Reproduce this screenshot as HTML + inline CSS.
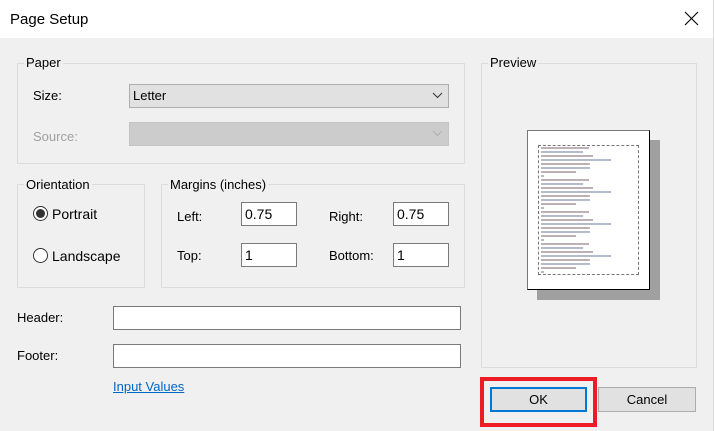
<!DOCTYPE html>
<html><head><meta charset="utf-8"><style>
*{margin:0;padding:0;box-sizing:border-box}
body{width:714px;height:431px;background:#f0f0f0;font-family:"Liberation Sans",sans-serif;font-size:13px;color:#000;position:relative;overflow:hidden}
.a{position:absolute}
.title{left:0;top:0;width:714px;height:38px;background:#fff}
.grp{position:absolute;border:1px solid #dcdcdc}
.lbl{position:absolute;background:#f0f0f0;padding:0 2px;font-size:13px;line-height:15px}
.t{position:absolute;line-height:15px;white-space:nowrap}
.box{position:absolute;background:#fff;border:1px solid #7a7a7a;padding:2px 0 0 3px;font-size:14px;line-height:18px}
.combo{position:absolute;background:#e1e1e1;border:1px solid #adadad;padding:3px 0 0 3px;font-size:13px;line-height:16px}
.radio{position:absolute;width:15px;height:15px;border:1px solid #333;border-radius:50%;background:#fff}
.btn{position:absolute;background:#e1e1e1;border:1px solid #adadad;text-align:center;line-height:23px;font-size:13px}
.ln{position:absolute;height:2px;left:541px}
</style></head><body>
<div class="a title"></div>
<div class="t" style="left:10px;top:11px;font-size:15px;line-height:17px">Page Setup</div>
<svg class="a" style="left:684px;top:11px" width="15" height="15"><path d="M1 1L14 14M14 1L1 14" stroke="#000" stroke-width="1.1"/></svg>
<div class="a" style="left:713px;top:0;width:1px;height:431px;background:#dadada"></div>

<div class="grp" style="left:17px;top:63px;width:448px;height:101px"></div>
<div class="lbl" style="left:24px;top:55px">Paper</div>
<div class="t" style="left:33px;top:88px">Size:</div>
<div class="combo" style="left:129px;top:84px;width:320px;height:24px">Letter</div>
<svg class="a" style="left:432px;top:92px" width="11" height="7"><path d="M1 1L5.5 5.5L10 1" stroke="#333" fill="none"/></svg>
<div class="t" style="left:33px;top:129px;color:#a0a0a0">Source:</div>
<div class="combo" style="left:129px;top:122px;width:320px;height:24px;background:#cccccc;border-color:#c4c4c4"></div>
<svg class="a" style="left:432px;top:130px" width="11" height="7"><path d="M1 1L5.5 5.5L10 1" stroke="#b0b0b0" fill="none"/></svg>

<div class="grp" style="left:17px;top:184px;width:128px;height:104px"></div>
<div class="lbl" style="left:24px;top:177px">Orientation</div>
<div class="radio" style="left:33px;top:206px"></div>
<div class="a" style="left:36px;top:209px;width:9px;height:9px;border-radius:50%;background:#333"></div>
<div class="t" style="left:52px;top:207px;font-size:14px">Portrait</div>
<div class="radio" style="left:33px;top:248px"></div>
<div class="t" style="left:52px;top:249px;font-size:14px">Landscape</div>

<div class="grp" style="left:161px;top:184px;width:304px;height:104px"></div>
<div class="lbl" style="left:168px;top:177px">Margins (inches)</div>
<div class="t" style="left:177px;top:209px">Left:</div>
<div class="box" style="left:241px;top:202px;width:56px;height:24px">0.75</div>
<div class="t" style="left:329px;top:209px">Right:</div>
<div class="box" style="left:393px;top:202px;width:56px;height:24px">0.75</div>
<div class="t" style="left:177px;top:248px">Top:</div>
<div class="box" style="left:241px;top:243px;width:56px;height:24px">1</div>
<div class="t" style="left:329px;top:248px">Bottom:</div>
<div class="box" style="left:393px;top:243px;width:56px;height:24px">1</div>

<div class="t" style="left:17px;top:310px">Header:</div>
<div class="box" style="left:113px;top:306px;width:348px;height:24px"></div>
<div class="t" style="left:17px;top:348px">Footer:</div>
<div class="box" style="left:113px;top:344px;width:348px;height:24px"></div>
<div class="t" style="left:113px;top:379px;color:#0066cc;text-decoration:underline">Input Values</div>

<div class="grp" style="left:481px;top:63px;width:216px;height:305px"></div>
<div class="lbl" style="left:488px;top:55px">Preview</div>
<div class="a" style="left:537px;top:140px;width:123px;height:160px;background:#a0a0a0"></div>
<div class="a" style="left:527px;top:130px;width:123px;height:160px;background:#fff;border:1px solid #777;border-right-color:#000;border-bottom-color:#000"></div>
<div class="a" style="left:538px;top:145px;width:101px;height:130px;border:1px dashed #777"></div>
<div id="lines"></div>
<script>
var w=[48,42,52,70,49,49,35,3],h='';
for(var b=0;b<4;b++)for(var i=0;i<8;i++){var y=147+(b*8+i)*4;h+='<div class="ln" style="top:'+y+'px;width:'+w[i]+'px;background:'+(i%2?'#b4bccb':'#bdb0b6')+'"></div>';}
document.getElementById('lines').innerHTML=h;
</script>

<div class="a" style="left:480px;top:377px;width:117px;height:50px;border:4px solid #ed1c24"></div>
<div class="btn" style="left:490px;top:387px;width:97px;height:25px;border:2px solid #0078d7;line-height:21px">OK</div>
<div class="btn" style="left:598px;top:387px;width:98px;height:25px">Cancel</div>
</body></html>
